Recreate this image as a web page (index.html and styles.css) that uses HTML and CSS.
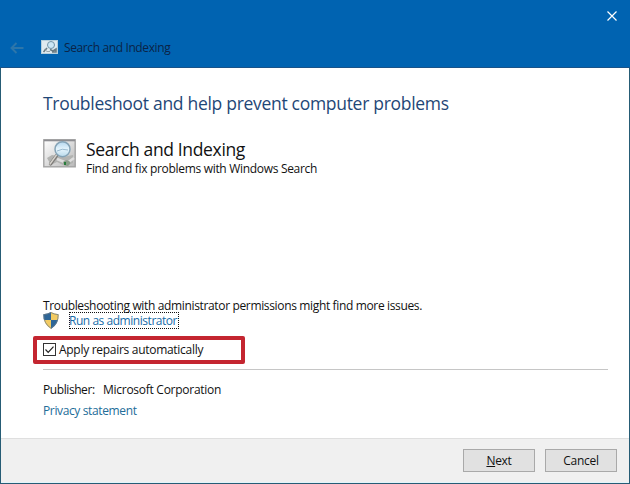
FILE: index.html
```html
<!DOCTYPE html>
<html lang="en">
<head>
<meta charset="utf-8">
<title>Search and Indexing</title>
<link rel="stylesheet" href="styles.css">
</head>
<body>
<svg width="0" height="0" class="defs" aria-hidden="true">
  <defs>
    <linearGradient id="panel" x1="0" y1="0" x2="1" y2="1"><stop offset="0" stop-color="#fff"/><stop offset="1" stop-color="#b9b9b9"/></linearGradient>
    <linearGradient id="lens" x1="0" y1="0" x2="0" y2="1"><stop offset="0" stop-color="#b4d7ee"/><stop offset=".5" stop-color="#e5f4fc"/><stop offset="1" stop-color="#b9daeb"/></linearGradient>
    <symbol id="search-icon" viewBox="0 0 33 29">
      <rect x=".8" y=".8" width="31.4" height="27" fill="url(#panel)" stroke="#a3a3a3" stroke-width="1.4"/>
      <path d="M1 1.5h31" stroke="#8e8e92" stroke-width="1.6"/>
      <path d="M4 19l5-3 5 1 6 1 10-2v8l-8 3-8-4-6 3z" fill="#b2b3b1"/>
      <path d="M14 20l10 4 7-5" fill="none" stroke="#dedede" stroke-width="2.5"/>
      <path d="M20 23q3-3 6-1t-1 5q-4 0-5-4z" fill="#8b9d8a"/>
      <path d="M22 23v3" stroke="#287d3c" stroke-width="2"/>
      <path d="M14 16L7.500 25" stroke="#7d7b78" stroke-width="3.200" stroke-linecap="round"/>
      <path d="M13.500 16L7 25" stroke="#d6d3cd" stroke-width="1.400" stroke-linecap="round"/>
      <circle cx="19.500" cy="10.200" r="7.500" fill="url(#lens)" stroke="#85a3b6" stroke-width="1.500"/>
      <path d="M14 12q5-3 11-1" fill="none" stroke="#9abbd0" stroke-width="1"/>
    </symbol>
  </defs>
</svg>
<div class="window">
  <header class="titlebar">
    <div class="close-row">
      <svg class="close" viewBox="0 0 10 10"><path d="M.5.5l9 9M9.500.5l-9 9" stroke="#fff" stroke-width="1.2"/></svg>
    </div>
    <div class="caption">
      <svg class="back" viewBox="0 0 14 12"><path d="M13.500 6H1.500M6.500 1L1.500 6l5 5" fill="none" stroke="#2d76aa" stroke-width="1.900"/></svg>
      <svg class="small-icon" viewBox="0 0 17 14"><rect width="17" height="14" fill="#dfeaf0"/><rect x=".5" y=".5" width="16" height="13" fill="none" stroke="#b5cfdd"/><path d="M6 8l-3.500 4M9 9.500l3 1.500 3-2v3h-4" fill="none" stroke="#697b83" stroke-width="1.600"/><path d="M3 9l3 2.500h3" fill="none" stroke="#9aa8ae"/><circle cx="10" cy="5" r="3.500" fill="#cce7f6" stroke="#7294a8" stroke-width="1"/></svg>
      <span class="caption-text">Search and Indexing</span>
    </div>
  </header>
  <main class="content">
    <h1>Troubleshoot and help prevent computer problems</h1>
    <section class="package">
      <svg class="package-icon"><use href="#search-icon"/></svg>
      <div>
        <h2>Search and Indexing</h2>
        <p class="description">Find and fix problems with Windows Search</p>
      </div>
    </section>
    <section class="options">
      <p class="hint">Troubleshooting with administrator permissions might find more issues.</p>
      <div class="admin">
        <svg class="shield" viewBox="0 0 16 17">
          <clipPath id="shield-clip"><path d="M8 0Q4.500 2 .3 2.200 0 12 8 17 16 12 15.700 2.200 11.500 2 8 0z"/></clipPath>
          <g clip-path="url(#shield-clip)"><path fill="#2e6698" d="M0 0h8v8H0zM8 8h8v9H8z"/><path fill="#f3cb62" d="M8 0h8v8H8zM0 8h8v9H0z"/></g>
          <path d="M8 .6Q4.500 2.400.8 2.600.5 11.500 8 16.300 15.500 11.500 15.200 2.600 11.500 2.400 8 .6z" fill="none" stroke="#6c7a84" stroke-width=".8"/>
        </svg>
        <a class="run">Run as administrator</a>
      </div>
      <label class="apply">
        <svg class="check" viewBox="0 0 13 13"><rect x=".5" y=".5" width="12" height="12" fill="#fff" stroke="#333"/><path d="M2.500 6.500l2.700 2.800 5.300-5.600" fill="none" stroke="#222" stroke-width="1.200"/></svg>
        <span class="apply-text">Apply repairs automatically</span>
      </label>
    </section>
    <section class="publisher">
      <p class="row"><span class="pub-label">Publisher:</span><span class="pub-name">Microsoft Corporation</span></p>
      <p class="row"><a class="privacy">Privacy statement</a></p>
    </section>
  </main>
  <footer class="footer">
    <button><u>N</u>ext</button>
    <button>Cancel</button>
  </footer>
</div>
</body>
</html>
```
FILE: styles.css
```css
* { box-sizing: border-box; }
body { margin: 0; font: 12px/16px "Open Sans", "Noto Sans", sans-serif; color: #111; }
h1, h2, p { margin: 0; font-weight: 400; white-space: nowrap; }
.defs { position: absolute; }
.window { width: 630px; height: 484px; display: flex; flex-direction: column; background: #fff; border: 1px solid #265c75; border-top: 0; }
.titlebar { height: 68px; margin: 0 -1px; background: #0063b1; border-bottom: 1px solid #195389; }
.close-row { height: 32px; display: flex; justify-content: flex-end; align-items: center; padding-right: 13px; }
.close { width: 10px; height: 10px; }
.caption { display: flex; align-items: center; height: 31px; padding-left: 10px; }
.back { width: 14px; height: 12px; }
.small-icon { width: 17px; height: 14px; margin: -1px 6px 0 17px; }
.caption-text { padding-top: 1px; color: #0b2347; letter-spacing: -.38px; }
.content { height: 370px; padding: 24px 21px 0 42px; }
h1 { height: 23px; color: #1f4777; font-size: 17.5px; line-height: 22px; letter-spacing: -.3px; }
.package { display: flex; gap: 10px; height: 40px; margin-top: 23px; }
.package-icon { width: 33px; height: 29px; margin-top: 1px; }
h2 { font-size: 17.5px; line-height: 22px; letter-spacing: -.35px; }
.description { line-height: 18px; letter-spacing: -.31px; }
.options { height: 72px; margin-top: 119px; }
.hint { height: 16px; line-height: 17px; letter-spacing: -.35px; }
.admin { display: flex; gap: 9px; height: 16px; }
.shield { width: 16px; height: 17px; margin: -1px 1px 0 0; }
.run { width: 110px; height: 17px; margin-top: -1px; line-height: 15px; color: #176ba8; border: 1px dotted #111; letter-spacing: -.46px; text-indent: -1px; white-space: nowrap; }
.apply { display: flex; align-items: center; gap: 3px; width: 212px; height: 28px; margin: 7px 0 0 -10px; padding-left: 6px; border: 4px solid #c42530; border-radius: 2px; }
.check { width: 13px; height: 13px; margin-top: -1px; }
.apply-text { margin-top: -1px; letter-spacing: -.29px; }
.publisher { border-top: 1px solid #c6c6c6; padding-top: 9px; }
.row { display: flex; gap: 8px; height: 21px; line-height: 21px; }
.pub-label { width: 52px; letter-spacing: -.42px; }
.pub-name { letter-spacing: -.27px; }
.privacy { color: #226d99; letter-spacing: -.37px; }
.footer { flex: 1; display: flex; justify-content: flex-end; gap: 10px; padding: 10px 12px 0; background: #f0f0f0; border-top: 1px solid #dfdfdf; box-shadow: inset 0 -1px #e2f4fa; }
button { width: 72px; height: 23px; padding: 0; background: #e1e1e1; border: 1px solid #a9a9a9; color: #111; font: 12px/20px "Open Sans", sans-serif; letter-spacing: -.3px; }
```
